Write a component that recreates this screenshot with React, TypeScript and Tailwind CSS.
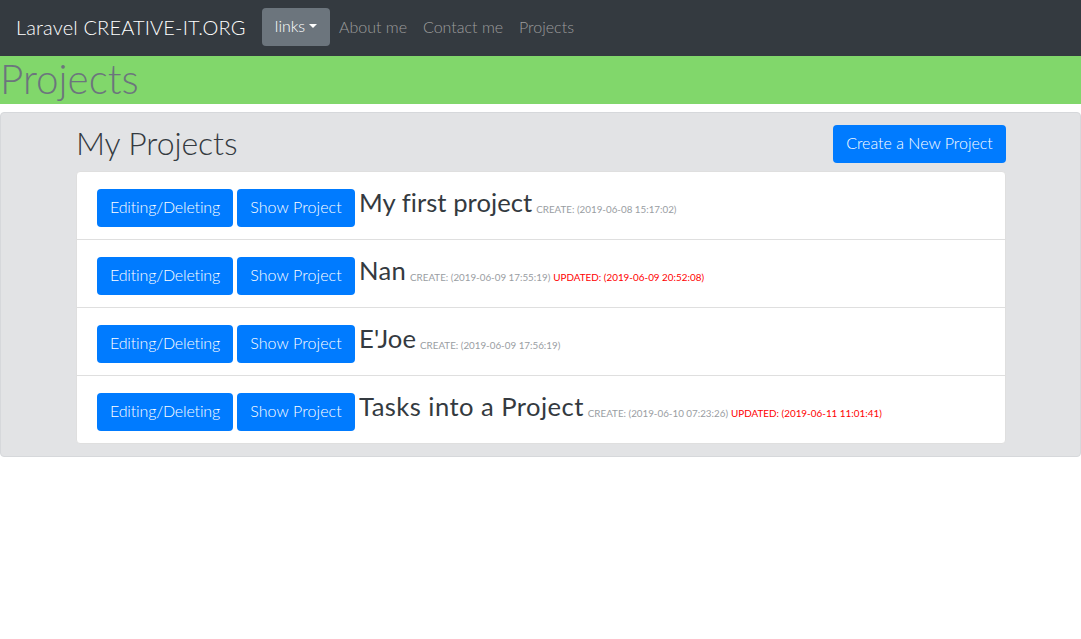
import React from 'react';

const font = "font-['Lato','Noto_Sans',sans-serif]";

const projects = [
  { name: 'My first project', fit: 'tracking-[0.05px]', created: '2019-06-08 15:17:02' },
  { name: 'Nan', fit: 'tracking-[0.3px]', created: '2019-06-09 17:55:19', updated: '2019-06-09 20:52:08' },
  { name: "E'Joe", fit: 'tracking-[0.1px]', created: '2019-06-09 17:56:19' },
  { name: 'Tasks into a Project', fit: 'tracking-[0.45px]', created: '2019-06-10 07:23:26', updated: '2019-06-11 11:01:41' },
];

const btn = 'flex items-center justify-center h-[38px] pb-[2px] rounded-[4px] bg-[#007bff] text-white text-[16px] font-light';

const App: React.FC = () => {
  return (
    <div className={`${font} min-h-[639px] bg-white text-[#343a40]`}>
      <nav className="flex items-center h-14 pl-4 pb-[2px] bg-[#343a40]">
        <span className="w-[246px] text-[20px] font-light text-white tracking-[0.15px]">Laravel CREATIVE-IT.ORG</span>
        <div className="flex items-center justify-center gap-1 w-[68px] h-[38px] pb-[2px] rounded-[4px] bg-[#6c757d] text-white font-light text-[16px]">
          links
          <span className="border-x-[4.8px] border-t-[4.8px] border-x-transparent border-t-white" />
        </div>
        <div className="flex text-[16px] font-light text-[#9d9d9d]">
          <span className="w-[84px] pl-[9px]">About me</span>
          <span className="w-[96px] pl-[9px]">Contact me</span>
          <span className="pl-[9px]">Projects</span>
        </div>
      </nav>

      <div className="flex items-center h-12 pb-[2px] bg-[#81d76b]">
        <h1 className="text-[40.4px] font-light leading-[46px] text-[#6c757d]">Projects</h1>
      </div>

      <section className="mt-2 h-[345px] rounded-[4px] border border-[#d6d8db] bg-[#e2e3e5]">
        <div className="w-[930px] ml-[75px] pt-3">
          <div className="flex items-center justify-between h-[38px]">
            <h2 className="pb-[2px] text-[32px] font-light leading-[36px] tracking-[-0.1px]">My Projects</h2>
            <div className={`${btn} w-[173px]`}>Create a New Project</div>
          </div>
          <ul className="mt-2 rounded-[4px] border border-[#dfdfdf] bg-white">
            {projects.map((p, i) => (
              <li key={p.name} className={`flex items-start pl-5 pt-[17px] ${i > 0 ? 'h-[68px] border-t border-[#dfdfdf]' : 'h-[67px]'}`}>
                <div className={`${btn} w-[136px] tracking-[-0.15px]`}>Editing/Deleting</div>
                <div className={`${btn} w-[118px] ml-1 tracking-[0.1px]`}>Show Project</div>
                <div className="flex items-baseline h-[38px] ml-1 -mt-[6px]">
                  <span className={`${p.fit} text-[25.6px] leading-[38px] text-[#343a40]`}>{p.name}</span>
                  <span className="relative top-px ml-1 text-[9.8px] text-[#999da2]">CREATE: ({p.created})</span>
                  {p.updated && (
                    <span className="relative top-px ml-[3px] text-[9.9px] text-[#ff0000]">UPDATED: ({p.updated})</span>
                  )}
                </div>
              </li>
            ))}
          </ul>
        </div>
      </section>
    </div>
  );
};

export default App;
